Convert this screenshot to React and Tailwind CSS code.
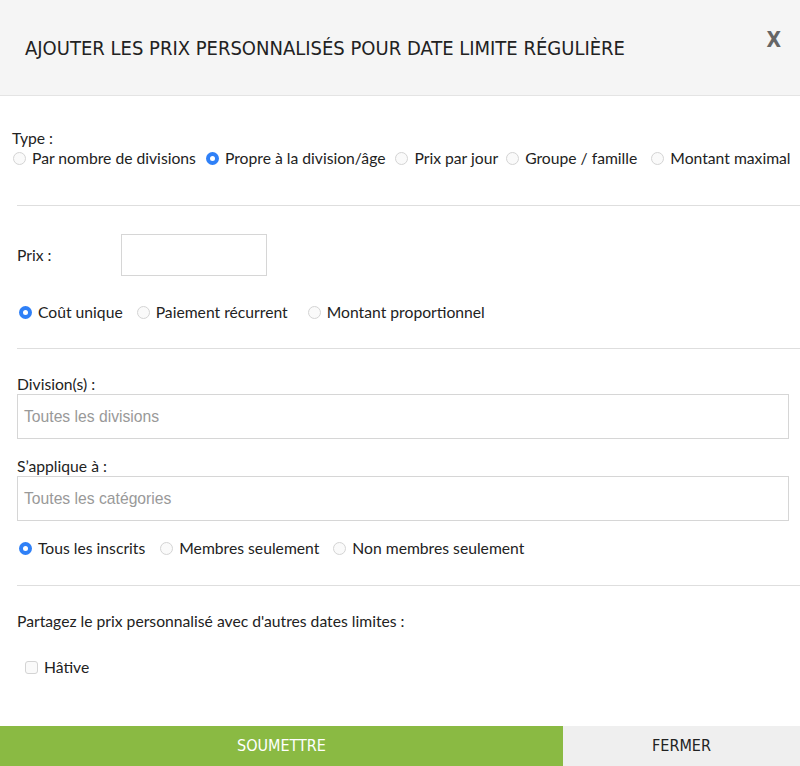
export default function App() {
  const Radio = ({ checked }) =>
    checked ? (
      <span className="inline-flex h-[13px] w-[13px] shrink-0 items-center justify-center rounded-full bg-[#2f80f7]">
        <span className="h-[5px] w-[5px] rounded-full bg-white" />
      </span>
    ) : (
      <span className="inline-block h-[13px] w-[13px] shrink-0 rounded-full border border-[#d4d4d4] bg-[#fafafa]" />
    );

  const Opt = ({ checked, label, cls = "" }) => (
    <label className={`flex shrink-0 items-center gap-[6px] whitespace-nowrap ${cls}`}>
      <Radio checked={checked} />
      <span>{label}</span>
    </label>
  );

  const cond = { fontFamily: '"Liberation Sans Narrow", "DejaVu Sans Condensed", "Roboto", sans-serif' };

  return (
    <div
      className="relative flex h-[766px] w-[800px] flex-col bg-white text-[15.7px] text-[#222]"
      style={{ fontFamily: 'Lato, "Noto Sans", sans-serif' }}
    >
      <div className="flex h-[96px] shrink-0 items-center justify-between border-b border-[#e4e4e4] bg-[#f5f5f5] pl-[25px] pr-[19px]">
        <h1 className="pt-[1px] text-[20px] leading-none text-[#222]" style={cond}>
          AJOUTER LES PRIX PERSONNALISÉS POUR DATE LIMITE RÉGULIÈRE
        </h1>
        <button className="mb-[14px] text-[21px] font-bold leading-none text-[#666]" style={cond}>
          X
        </button>
      </div>

      <div className="flex-1">
        <div className="pl-[12px] pt-[32px] leading-[20px]">
          <div>Type :</div>
          <div className="flex items-center">
            <Opt checked={false} label="Par nombre de divisions" cls="ml-[1px] mr-[10px]" />
            <Opt checked label="Propre à la division/âge" cls="mr-[10px]" />
            <Opt checked={false} label="Prix par jour" cls="mr-[8px]" />
            <Opt checked={false} label="Groupe / famille" cls="mr-[14px]" />
            <Opt checked={false} label="Montant maximal" />
          </div>
        </div>

        <div className="ml-[17px] mt-[37px] h-px bg-[#dedede]" />

        <div className="pl-[17px] leading-[20px]">
          <div className="mt-[28px] flex h-[42px] items-center">
            <span className="w-[104px]">Prix :</span>
            <div className="h-[42px] w-[146px] border border-[#d6d6d6] bg-white" />
          </div>
          <div className="mt-[26px] flex items-center">
            <Opt checked label="Coût unique" cls="ml-[2px] mr-[14px]" />
            <Opt checked={false} label="Paiement récurrent" cls="mr-[20px]" />
            <Opt checked={false} label="Montant proportionnel" />
          </div>
        </div>

        <div className="ml-[17px] mt-[26px] h-px bg-[#dedede]" />

        <div className="pl-[17px] pr-[11px] leading-[20px]">
          <div className="mt-[25px]">Division(s) :</div>
          <div
            className="flex h-[45px] items-center border border-[#d6d6d6] px-[6px] text-[15.7px] text-[#999]"
            style={{ fontFamily: '"Liberation Sans", Arial, sans-serif' }}
          >
            Toutes les divisions
          </div>
          <div className="mt-[17px]">S’applique à :</div>
          <div
            className="flex h-[45px] items-center border border-[#d6d6d6] px-[6px] text-[15.7px] text-[#999]"
            style={{ fontFamily: '"Liberation Sans", Arial, sans-serif' }}
          >
            Toutes les catégories
          </div>
          <div className="mt-[17px] flex items-center">
            <Opt checked label="Tous les inscrits" cls="ml-[2px] mr-[15px]" />
            <Opt checked={false} label="Membres seulement" cls="mr-[14px]" />
            <Opt checked={false} label="Non membres seulement" />
          </div>
        </div>

        <div className="ml-[17px] mt-[27px] h-px bg-[#dedede]" />

        <div className="pl-[17px] leading-[20px]">
          <div className="mt-[25px]">Partagez le prix personnalisé avec d'autres dates limites :</div>
          <label className="ml-[8px] mt-[26px] flex items-center gap-[6px]">
            <span className="inline-block h-[13px] w-[13px] rounded-[3px] border border-[#d4d4d4] bg-[#fafafa]" />
            <span>Hâtive</span>
          </label>
        </div>
      </div>

      <div className="flex h-[40px] shrink-0 text-[16px]" style={cond}>
        <button className="flex w-[563px] items-center justify-center bg-[#8aba43] text-white">SOUMETTRE</button>
        <button className="flex flex-1 items-center justify-center bg-[#efefef] text-[#222]">FERMER</button>
      </div>
    </div>
  );
}
